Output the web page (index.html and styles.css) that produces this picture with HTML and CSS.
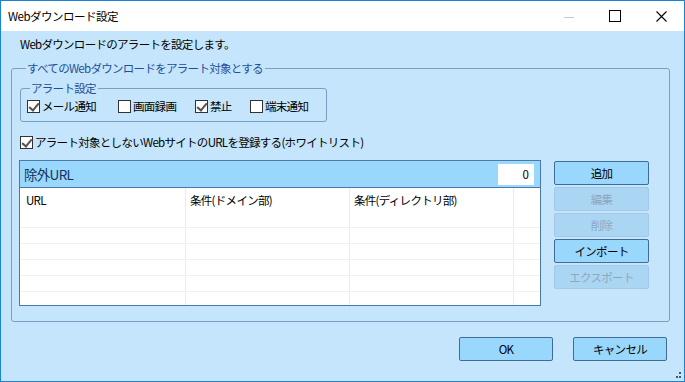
FILE: index.html
```html
<!DOCTYPE html>
<html lang="ja">
<head>
  <meta charset="UTF-8" />
  <title>Webダウンロード設定</title>
  <link rel="stylesheet" href="styles.css">
</head>
<body>
  <div class="window">
    <div class="titlebar">
      <span class="title">Webダウンロード設定</span>
      <div class="controls">
        <span class="ctl ctl-min"></span>
        <span class="ctl ctl-max"></span>
        <span class="ctl ctl-close">
          <svg width="11" height="11" viewBox="0 0 11 11"><path d="M0.5 0.5L10.5 10.5M10.5 0.5L0.5 10.5" stroke="#000" stroke-width="1.1" fill="none"/></svg>
        </span>
      </div>
    </div>

    <div class="client">
      <p class="desc">Webダウンロードのアラートを設定します。</p>

      <fieldset class="group outer">
        <legend>すべてのWebダウンロードをアラート対象とする</legend>

        <fieldset class="group inner">
          <legend>アラート設定</legend>
          <div class="check-row">
            <label class="check w-mail"><span class="box on"></span>メール通知</label>
            <label class="check w-rec"><span class="box"></span>画面録画</label>
            <label class="check w-ban"><span class="box on"></span>禁止</label>
            <label class="check"><span class="box"></span>端末通知</label>
          </div>
        </fieldset>

        <label class="check white"><span class="box on"></span>アラート対象としないWebサイトのURLを登録する(ホワイトリスト)</label>

        <div class="list-area">
          <div class="panel">
            <div class="panel-head">
              <span class="panel-title">除外URL</span>
              <span class="count">0</span>
            </div>
            <div class="grid">
              <div class="row head">
                <span class="cell c1">URL</span>
                <span class="cell c2">条件(ドメイン部)</span>
                <span class="cell c3">条件(ディレクトリ部)</span>
                <span class="cell c4"></span>
              </div>
              <div class="row"><span class="cell c1"></span><span class="cell c2"></span><span class="cell c3"></span><span class="cell c4"></span></div>
              <div class="row"><span class="cell c1"></span><span class="cell c2"></span><span class="cell c3"></span><span class="cell c4"></span></div>
              <div class="row"><span class="cell c1"></span><span class="cell c2"></span><span class="cell c3"></span><span class="cell c4"></span></div>
              <div class="row"><span class="cell c1"></span><span class="cell c2"></span><span class="cell c3"></span><span class="cell c4"></span></div>
              <div class="row"><span class="cell c1"></span><span class="cell c2"></span><span class="cell c3"></span><span class="cell c4"></span></div>
              <div class="row last"><span class="cell c1"></span><span class="cell c2"></span><span class="cell c3"></span><span class="cell c4"></span></div>
            </div>
          </div>

          <div class="side-buttons">
            <button class="btn">追加</button>
            <button class="btn" disabled>編集</button>
            <button class="btn" disabled>削除</button>
            <button class="btn">インポート</button>
            <button class="btn" disabled>エクスポート</button>
          </div>
        </div>
      </fieldset>

      <div class="footer">
        <button class="btn wide">OK</button>
        <button class="btn wide">キャンセル</button>
      </div>

      <div class="grip">
        <i></i><i></i><i></i>
      </div>
    </div>
  </div>
</body>
</html>
```

FILE: styles.css
```css
* {
  box-sizing: border-box;
}

body {
  margin: 0;
  font-family: "Noto Sans CJK JP", "Noto Sans", sans-serif;
  font-size: 11.5px;
  color: #000;
  background: #fff;
}

.window {
  width: 685px;
  height: 382px;
  border: 1px solid #1883d7;
  display: flex;
  flex-direction: column;
  background: #c4e5fb;
}

.titlebar {
  height: 30px;
  background: #fff;
  display: flex;
  align-items: center;
  padding-left: 7px;
}

.title {
  letter-spacing: -0.5px;
  line-height: 14px;
}

.controls {
  margin-left: auto;
  display: flex;
  height: 100%;
}

.ctl {
  width: 46px;
  height: 100%;
  display: flex;
  align-items: center;
  justify-content: center;
}

.ctl-min::before {
  content: "";
  width: 10px;
  height: 1px;
  background: #c8c8c8;
  margin-top: 2px;
}

.ctl-max::before {
  content: "";
  width: 10px;
  height: 10px;
  border: 1px solid #000;
}

.client {
  flex: 1;
  display: flex;
  flex-direction: column;
  padding: 6px 14px 0 10px;
  position: relative;
}

.desc {
  margin: 0 0 0 9px;
  line-height: 14px;
  letter-spacing: -0.7px;
}

.group {
  margin: 0;
  border: 1px solid #7d9ec0;
  border-radius: 3px;
  min-width: 0;
}

.group legend {
  color: #1f4f9a;
  line-height: 14px;
  padding: 0 2px 0 1px;
  letter-spacing: -0.7px;
}

.outer {
  margin-top: 10px;
  height: 261px;
  padding: 0 0 0 8px;
}

.outer > legend {
  margin-left: 6px;
}

.inner {
  width: 307px;
  margin-top: 6px;
  padding: 4px 0 8px 6px;
}

.inner > legend {
  margin-left: 3px;
}

.check-row {
  display: flex;
}

.check {
  display: flex;
  align-items: center;
  line-height: 14px;
  letter-spacing: -0.7px;
  white-space: nowrap;
}

.w-mail { width: 91px; }
.w-rec { width: 77px; }
.w-ban { width: 55px; }

.box {
  width: 13px;
  height: 13px;
  border: 1px solid #333;
  background: #fff;
  margin-right: 2px;
  position: relative;
}

.box.on::after {
  content: "";
  position: absolute;
  left: 3px;
  top: 0px;
  width: 4px;
  height: 8px;
  border: solid #555;
  border-width: 0 2px 2px 0;
  transform: rotate(40deg);
}

.white {
  margin-top: 13px;
}

.list-area {
  display: flex;
  margin-top: 11px;
  margin-left: -1px;
}

.panel {
  width: 522px;
  height: 146px;
  border: 1px solid #4a78aa;
  display: flex;
  flex-direction: column;
  background: #fff;
}

.panel-head {
  height: 27px;
  background: #9ad7fc;
  border-bottom: 1px solid #4a78aa;
  display: flex;
  align-items: center;
  padding: 0 6px 0 4px;
}

.panel-title {
  font-size: 13.5px;
  letter-spacing: -0.7px;
  color: #10325e;
}

.count {
  margin-left: auto;
  width: 36px;
  height: 21px;
  background: #fff;
  text-align: right;
  line-height: 21px;
  padding-right: 5px;
}

.grid {
  flex: 1;
  overflow: hidden;
}

.row {
  display: flex;
  height: 16px;
  border-bottom: 1px solid #f0f0f0;
}

.row.head {
  height: 24px;
  border-bottom: none;
  align-items: center;
}

.cell {
  height: 100%;
  border-right: 1px solid #ececec;
  letter-spacing: -0.7px;
  display: flex;
  align-items: center;
  white-space: nowrap;
}

.c1 { width: 166px; padding-left: 6px; }
.c2 { width: 164px; padding-left: 4px; }
.c3 { width: 164px; padding-left: 4px; }
.c4 { flex: 1; border-right: none; }

.side-buttons {
  display: flex;
  flex-direction: column;
  gap: 2px;
  margin-left: 13px;
  padding-top: 1px;
}

.btn {
  font-family: inherit;
  font-size: 11.5px;
  letter-spacing: -0.7px;
  width: 95px;
  height: 24px;
  background: #9ad7fc;
  border: 1px solid #3f6c98;
  border-radius: 2px;
  color: #000;
  padding: 0;
}

.btn:disabled {
  background: #abd6f3;
  border-color: #a2c9e6;
  color: #8ba8c0;
}

.footer {
  display: flex;
  justify-content: flex-end;
  gap: 20px;
  margin-top: 15px;
  padding-right: 3px;
}

.wide {
  width: 94px;
}

.grip {
  position: absolute;
  right: 3px;
  bottom: 3px;
  width: 6px;
  height: 6px;
}

.grip i {
  position: absolute;
  width: 2px;
  height: 2px;
  background: #3a5a7a;
}

.grip i:nth-child(1) { right: 0; top: 0; }
.grip i:nth-child(2) { right: 0; bottom: 0; }
.grip i:nth-child(3) { right: 3px; bottom: 0; }
```
